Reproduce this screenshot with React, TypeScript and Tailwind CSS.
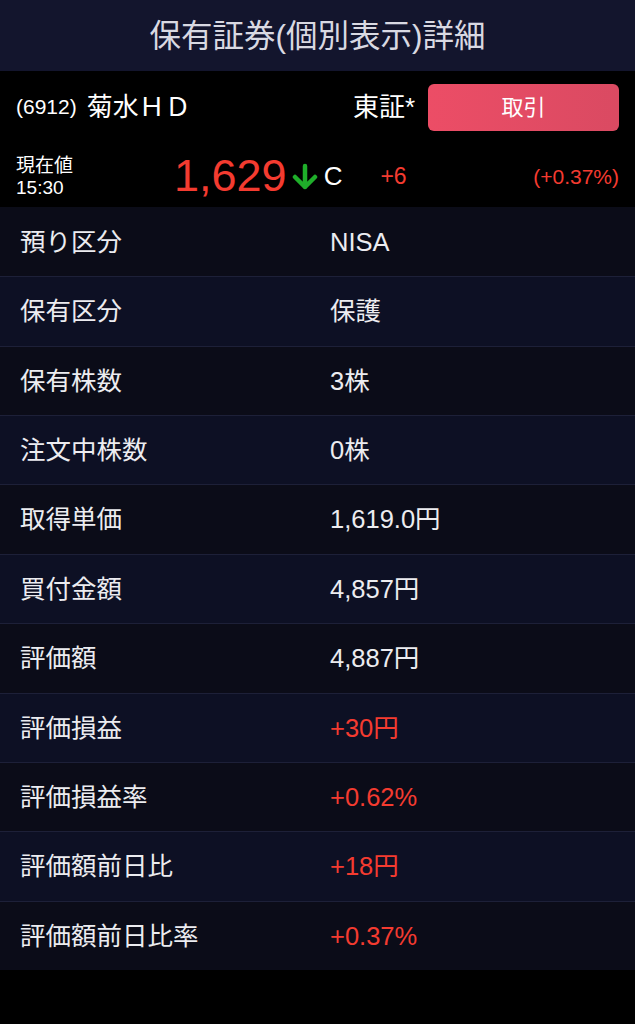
import React from "react";

const rows: { label: string; value: string; red?: boolean }[] = [
  { label: "預り区分", value: "NISA" },
  { label: "保有区分", value: "保護" },
  { label: "保有株数", value: "3株" },
  { label: "注文中株数", value: "0株" },
  { label: "取得単価", value: "1,619.0円" },
  { label: "買付金額", value: "4,857円" },
  { label: "評価額", value: "4,887円" },
  { label: "評価損益", value: "+30円", red: true },
  { label: "評価損益率", value: "+0.62%", red: true },
  { label: "評価額前日比", value: "+18円", red: true },
  { label: "評価額前日比率", value: "+0.37%", red: true },
];

export default function App() {
  return (
    <div
      className="w-[635px] h-[1024px] bg-black overflow-hidden"
      style={{ fontFamily: '"Liberation Sans", "Noto Sans CJK JP", sans-serif' }}
    >
      <div className="h-[71px] bg-[#13152d] flex items-center justify-center">
        <span className="text-[31.5px] text-[#d9d9e2] leading-none mt-[2px]">保有証券(個別表示)詳細</span>
      </div>
      <div className="h-[136px] bg-black flex flex-col">
        <div className="h-[72px] flex items-center pl-[16px] pr-[16px]">
          <span className="text-[21px] text-white">(6912)</span>
          <span className="text-[26px] text-white ml-[10px]">菊水ＨＤ</span>
          <span className="ml-auto text-[26px] text-white">東証*</span>
          <div className="ml-[13px] w-[191px] h-[47px] rounded-[6px] bg-gradient-to-r from-[#ec4d66] to-[#da4a62] flex items-center justify-center">
            <span className="text-[22px] text-white">取引</span>
          </div>
        </div>
        <div className="flex-1 flex items-center pl-[16px] pr-[16px]">
          <div className="flex flex-col text-white text-[19px] leading-[22px] w-[158px] mt-[4px]">
            <span>現在値</span>
            <span>15:30</span>
          </div>
          <span className="text-[45px] text-[#f43b30] leading-none">1,629</span>
          <svg width="26" height="28" viewBox="0 0 26 28" className="ml-[5px] mt-[4px]">
            <path d="M13 3 V24 M3 14 L13 24 L23 14" stroke="#1fae2a" strokeWidth="4.5" fill="none" strokeLinecap="round" strokeLinejoin="round" />
          </svg>
          <span className="ml-[6px] text-[26px] text-white leading-none mt-[2px]">C</span>
          <span className="ml-[38px] text-[23px] text-[#f43b30] leading-none mt-[2px]">+6</span>
          <span className="ml-auto text-[21px] text-[#f43b30] leading-none mt-[2px]">(+0.37%)</span>
        </div>
      </div>
      <div>
        {rows.map((r, i) => (
          <div
            key={r.label}
            className={`h-[69.36px] flex items-center box-border ${i > 0 ? "border-t border-[#1d2038]" : ""} ${
              i % 2 === 0 ? "bg-[#0b0c18]" : "bg-[#0d1024]"
            }`}
          >
            <span className="w-[330px] pl-[20px] text-[25.5px] text-[#ececf0]">{r.label}</span>
            <span className={`text-[25.5px] ${r.red ? "text-[#f43b30]" : "text-[#ececf0]"}`}>{r.value}</span>
          </div>
        ))}
      </div>
    </div>
  );
}
